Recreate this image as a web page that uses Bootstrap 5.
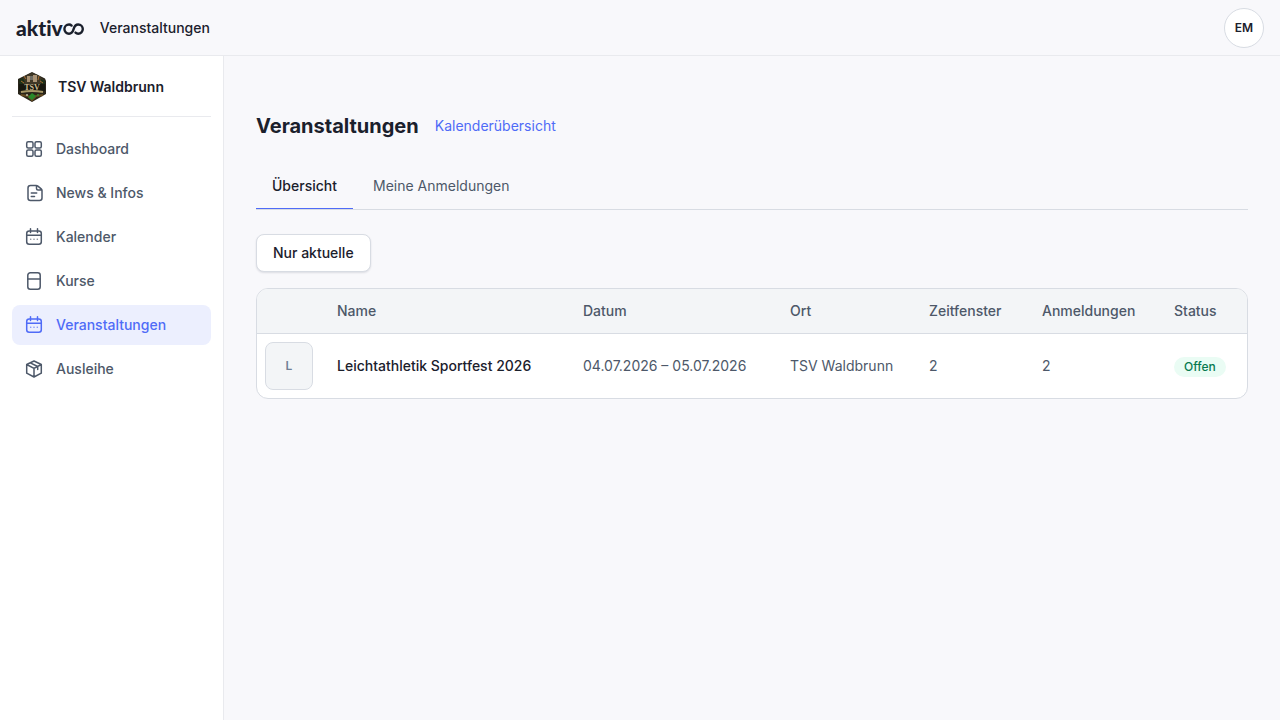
<!DOCTYPE html>
<html lang="de">
<head>
<meta charset="utf-8">
<meta name="viewport" content="width=device-width, initial-scale=1">
<title>Veranstaltungen – TSV Waldbrunn</title>
<link href="https://cdn.jsdelivr.net/npm/bootstrap@5.3.0/dist/css/bootstrap.min.css" rel="stylesheet">
<style>
  :root { --ink: #1b202c; --muted: #4d5869; --line: #d8dce3; --soft: #e9eaee; --brand: #4f6bf7; --page: #f8f8fb; }
  body { font-family: Inter, "Liberation Sans", sans-serif; font-size: 14px; line-height: 20px; color: var(--ink); background: var(--page); }
  a { color: var(--brand); text-decoration: none; }
  .topbar { height: 56px; border-bottom: 1px solid var(--soft); }
  .logo { color: var(--ink); }
  .logo-word { font-family: Lato, sans-serif; font-size: 21px; font-weight: 900; line-height: 24px; font-variant-ligatures: none; }
  .page-name { font-weight: 500; }
  .club-name { font-weight: 600; }
  .avatar { width: 40px; height: 40px; border: 1px solid var(--line); background: #fff; font-size: 12px; font-weight: 600; color: var(--ink); }
  .sidebar { width: 224px; border-right: 1px solid var(--soft); }
  .club { height: 61px; gap: 10px; padding-top: 2px; border-bottom: 1px solid var(--soft); }
  .side-link { height: 40px; gap: 12px; padding: 0 12px; border-radius: 8px; color: var(--muted); font-weight: 500; }
  .side-link.active { background: #eceffe; color: var(--brand); }
  .side-link svg { fill: none; stroke: currentColor; stroke-width: 1.5; stroke-linecap: round; stroke-linejoin: round; }
  .content { padding: 56px 32px 32px; min-width: 0; }
  h1 { font-size: 20px; line-height: 28px; font-weight: 700; }
  .tabs { border-bottom: 1px solid var(--line); }
  .tabs a { padding: 12px 16px; color: var(--muted); border-bottom: 1px solid transparent; }
  .tabs a.active { color: var(--ink); font-weight: 500; border-bottom-color: var(--brand); }
  .filter-btn { height: 38px; padding: 0 16px; background: #fff; border: 1px solid var(--line); border-radius: 8px; font-size: 14px; font-weight: 500; color: var(--ink); box-shadow: 0 1px 2px rgba(20, 28, 50, .12); }
  .events { border: 1px solid var(--line); border-radius: 12px; background: #fff; }
  .events table { table-layout: fixed; color: var(--muted); border-collapse: separate; border-spacing: 0; }
  .events th, .events td { padding: 0 16px; white-space: nowrap; }
  .events th { height: 45px; background: #f3f5f7; border-bottom: 1px solid var(--line); font-weight: 500; }
  .events td { height: 64px; }
  .events td:first-child { padding: 8px; }
  .events .event-name { color: var(--ink); font-weight: 500; }
  .thumb { width: 48px; height: 48px; border: 1px solid var(--line); border-radius: 8px; background: #f3f5f7; font-size: 12px; font-weight: 600; color: #718096; }
  .state { padding: 2px 10px; border-radius: 10px; line-height: 16px; font-size: 12px; font-weight: 500; color: #087a50; background: #eafcf4; }
</style>
</head>
<body class="d-flex flex-column min-vh-100">
<header class="topbar d-flex align-items-center px-3">
  <a href="#" class="logo d-flex align-items-center me-3" aria-label="aktivoo">
    <span class="logo-word">aktiv</span>
    <svg width="21" height="16" viewBox="0 0 21 16" fill="none" stroke="currentColor" stroke-width="2.4" stroke-linecap="round"><path d="M8.600 5.600C7.900 4.900 7.100 4.500 6 4.500A4.600 4.600 0 0 0 6 13.700C8.500 13.700 9.700 12.200 10.600 9.100S13.500 4.500 15.200 4.500A4.600 4.600 0 0 1 15.200 13.700C14.100 13.700 13.200 13.300 12.500 12.600"/></svg>
  </a>
  <span class="page-name">Veranstaltungen</span>
  <button type="button" class="avatar rounded-circle ms-auto p-0">EM</button>
</header>
<div class="d-flex flex-grow-1">
  <aside class="sidebar bg-white px-2 flex-shrink-0">
    <div class="px-1">
      <div class="club d-flex align-items-center">
        <svg class="ms-1" width="32" height="32" viewBox="0 0 32 32" role="img" aria-label="Vereinswappen">
          <path d="M16 1 29 7.500 30 10v13L16 31 2 23V8Z" fill="#29251a"/>
          <path d="M4 9 11 4l5-2 6 2 6 5-2 5-20-1Z" fill="#3f3827"/>
          <path d="M11 5h3v6h-3zM17 4h4v7h-4z" fill="#a89274"/>
          <path d="M14 5h3v4h-3z" fill="#6e6c64"/>
          <path d="M3 9 7 7l2 4-5 4zM25 8l4 2v5l-4-2z" fill="#1c3018"/>
          <path d="M5 10l3 2M24 10l3 2M8 5l2 3M23 5l-1 4" stroke="#a66b2e"/>
          <path d="M3 13h26v7H3z" fill="#17180f"/>
          <text x="16" y="19" text-anchor="middle" font-family="Liberation Serif" font-size="8" font-weight="700" fill="#cab991">TSV</text>
          <path d="M5 21q11-2 22 0" fill="none" stroke="#a79867" stroke-width="2"/>
          <path d="M5 24l7 1 4 4 4-4 7-1" fill="none" stroke="#654a21" stroke-width="2"/>
          <path d="m16 22 4 3-4 4-4-3z" fill="#28882a"/>
          <circle cx="11" cy="24" r="1" fill="#bfc0ad"/><circle cx="22" cy="24" r="1" fill="#3f8532"/>
        </svg>
        <span class="club-name">TSV Waldbrunn</span>
      </div>
      <nav class="d-flex flex-column gap-1 pt-2 mt-1" aria-label="Hauptnavigation">
        <a href="#" class="side-link d-flex align-items-center"><svg width="20" height="20" viewBox="0 0 20 20"><rect x="2.700" y="2.700" width="6.300" height="6.300" rx="1.500"/><rect x="11" y="2.700" width="6.300" height="6.300" rx="1.500"/><rect x="2.700" y="11" width="6.300" height="6.300" rx="1.500"/><rect x="11" y="11" width="6.300" height="6.300" rx="1.500"/></svg>Dashboard</a>
        <a href="#" class="side-link d-flex align-items-center"><svg width="20" height="20" viewBox="0 0 20 20"><path d="M4 5a2.500 2.500 0 0 1 2.500-2.500h5.700c.7 0 1.200.2 1.700.6l3.300 2.700c.5.400.8 1 .8 1.700v7.500a2.500 2.500 0 0 1-2.500 2.500h-9A2.500 2.500 0 0 1 4 15ZM12.500 3v2.500c0 .8.700 1.500 1.500 1.500h3.500M7.300 10h5.400M7.300 13.500h3.200"/></svg>News &amp; Infos</a>
        <a href="#" class="side-link d-flex align-items-center"><svg width="20" height="20" viewBox="0 0 20 20"><rect x="2.700" y="4" width="14.600" height="13.300" rx="2.500"/><path d="M2.700 8.200h14.600M6.500 1.800v3.800M13.500 1.800v3.800"/><path stroke-width="1.600" opacity=".7" d="M6.700 12.200h.01M10 12.200h.01M13.300 12.200h.01"/></svg>Kalender</a>
        <a href="#" class="side-link d-flex align-items-center"><svg width="20" height="20" viewBox="0 0 20 20"><rect x="3.800" y="1.800" width="12.400" height="16.400" rx="2.500"/><path d="M3.800 8h12.400"/></svg>Kurse</a>
        <a href="#" class="side-link active d-flex align-items-center" aria-current="page"><svg width="20" height="20" viewBox="0 0 20 20"><rect x="2.700" y="4" width="14.600" height="13.300" rx="2.500"/><path d="M2.700 8.200h14.600M6.500 1.800v3.800M13.500 1.800v3.800"/><path stroke-width="1.600" opacity=".7" d="M6.700 12.200h.01M10 12.200h.01M13.300 12.200h.01"/></svg>Veranstaltungen</a>
        <a href="#" class="side-link d-flex align-items-center"><svg width="20" height="20" viewBox="0 0 20 20"><path d="m10 2 7.300 3.500v8.700L10 18l-7.300-3.800V5.500ZM2.700 5.500 10 9.300l7.300-3.800M10 9.300V18M6.300 3.800l7.400 3.700v3"/></svg>Ausleihe</a>
      </nav>
    </div>
  </aside>
  <main class="content flex-grow-1">
    <div class="d-flex align-items-center gap-3 mb-4">
      <h1 class="mb-0">Veranstaltungen</h1>
      <a href="#">Kalenderübersicht</a>
    </div>
    <nav class="tabs d-flex gap-1 mb-4" aria-label="Ansichten">
      <a href="#" class="active" aria-current="page">Übersicht</a>
      <a href="#">Meine Anmeldungen</a>
    </nav>
    <button type="button" class="filter-btn d-block mb-3">Nur aktuelle</button>
    <div class="events overflow-hidden">
      <table class="w-100 align-middle">
        <colgroup><col width="64"><col width="246"><col width="207"><col width="139"><col width="113"><col width="132"><col width="89"></colgroup>
        <thead><tr><th></th><th>Name</th><th>Datum</th><th>Ort</th><th>Zeitfenster</th><th>Anmeldungen</th><th>Status</th></tr></thead>
        <tbody><tr>
          <td><div class="thumb d-flex align-items-center justify-content-center">L</div></td>
          <td class="event-name">Leichtathletik Sportfest 2026</td>
          <td>04.07.2026 – 05.07.2026</td><td>TSV Waldbrunn</td><td>2</td><td>2</td>
          <td><span class="state d-inline-block">Offen</span></td>
        </tr></tbody>
      </table>
    </div>
  </main>
</div>
<script src="https://cdn.jsdelivr.net/npm/bootstrap@5.3.0/dist/js/bootstrap.bundle.min.js"></script>
</body>
</html>
